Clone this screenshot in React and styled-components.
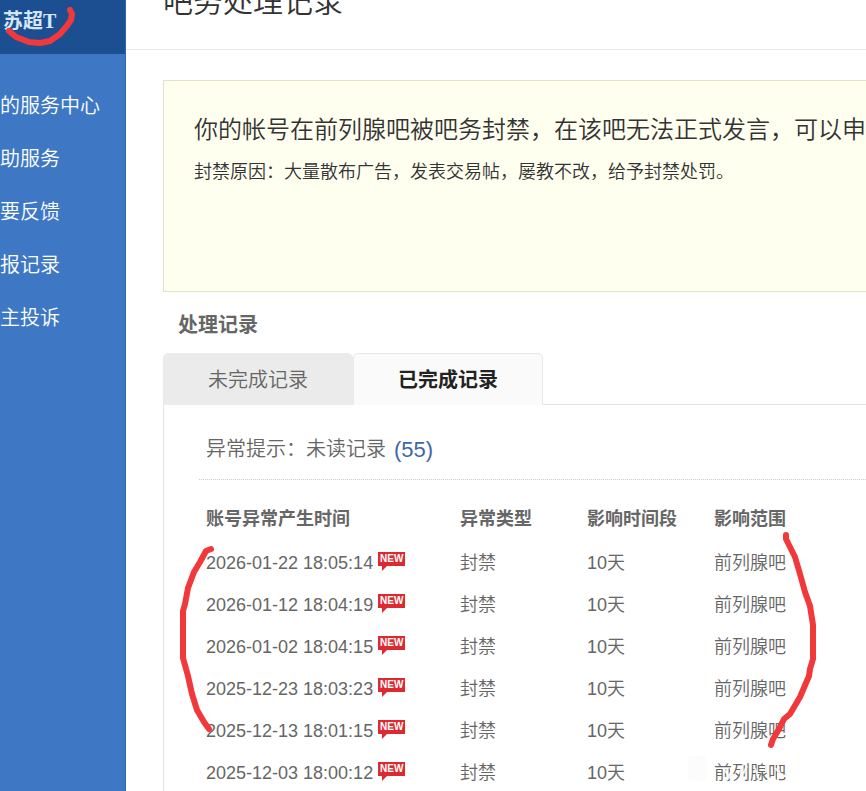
import React from "react";
import styled, { createGlobalStyle } from "styled-components";

const GlobalStyle = createGlobalStyle`
  * { box-sizing: border-box; }
  body {
    margin: 0;
    background: #fff;
    color: #666;
    font-family: "Liberation Sans", "Noto Sans CJK SC", sans-serif;
    font-weight: 350;
  }
`;

const Page = styled.div`
  position: relative;
  display: flex;
  height: 100vh;
  overflow: hidden;
`;

const Sidebar = styled.aside`
  flex: 0 0 126px;
  background: #3e78c5;
  border-right: 1px solid #3464ae;
  overflow: hidden;
`;

const UserName = styled.div`
  height: 54px;
  margin-right: -1px;
  padding: 7px 3px;
  background: #1c4f92;
  color: #d3e6fa;
  font: bold 20px/28px "Liberation Serif", "Noto Sans CJK SC", serif;
  white-space: nowrap;
`;

const Nav = styled.nav`
  display: flex;
  flex-direction: column;
  padding-top: 26px;
`;

const NavLink = styled.a`
  color: #fff;
  font-size: 20px;
  line-height: 53px;
  text-decoration: none;
  white-space: nowrap;
`;

const Main = styled.main`
  flex: 1;
  min-width: 0;
  overflow: hidden;
`;

const Header = styled.header`
  display: flex;
  align-items: flex-start;
  height: 50px;
  padding-left: 37px;
  border-bottom: 1px solid #e8e8e8;
`;

const Title = styled.h1`
  margin: -20px 0 0;
  color: #333;
  font-size: 30px;
  font-weight: 350;
  line-height: 44px;
`;

const Content = styled.div`
  padding: 30px 0 0 37px;
`;

const Notice = styled.section`
  height: 212px;
  padding: 31px 30px;
  background: #fffff0;
  border: 1px solid #e2e2c4;
  border-right: 0;
  color: #333;
  white-space: nowrap;
  overflow: hidden;
`;

const NoticeTitle = styled.p`
  margin: 0;
  font-size: 24px;
  line-height: 36px;
`;

const NoticeReason = styled.p`
  margin: 9px 0 0;
  font-size: 18px;
  line-height: 30px;
`;

const SectionTitle = styled.h2`
  margin: 0;
  padding: 16px 15px 10px;
  font-size: 20px;
  line-height: 35px;
`;

const Tabs = styled.div`
  display: flex;
  border-bottom: 1px solid #e2e2e2;
`;

const Tab = styled.button`
  height: 52px;
  margin: 0 0 -1px;
  padding: 0 44px 2px;
  border: 1px solid ${(p) => (p.$active ? "#e8e8e8" : "#ebebeb")};
  border-bottom-color: ${(p) => (p.$active ? "#fafafa" : "#ebebeb")};
  border-radius: 5px 5px 0 0;
  background: ${(p) => (p.$active ? "#fafafa" : "#ebebeb")};
  color: ${(p) => (p.$active ? "#222" : "#666")};
  font-family: inherit;
  font-size: 20px;
  font-weight: ${(p) => (p.$active ? 700 : 350)};
`;

const Panel = styled.section`
  padding: 15px 0 0 35px;
  border-left: 1px solid #e2e2e2;
`;

const Unread = styled.div`
  display: flex;
  gap: 8px;
  padding-left: 7px;
  border-bottom: 1px dotted #ccc;
  font-size: 20px;
  line-height: 59px;
`;

const UnreadLink = styled.a`
  color: #3d67a5;
  font-size: 22px;
  text-decoration: none;
`;

const Records = styled.table`
  width: 100%;
  margin-top: 16px;
  border-collapse: collapse;
  table-layout: fixed;
  font-size: 18px;
  line-height: 24px;
  text-align: left;
  white-space: nowrap;
`;

const Head = styled.th`
  width: ${(p) => p.$width || "auto"};
  height: 46px;
  padding: 0 7px;
`;

const Cell = styled.td`
  height: 42px;
  padding: 0 7px;
`;

const Time = styled.div`
  display: flex;
  align-items: center;
  gap: 5px;
`;

const NewBadge = styled.span`
  position: relative;
  width: 27px;
  margin-bottom: 8px;
  background: #dd2a30;
  color: #fff;
  font-size: 10px;
  font-weight: 700;
  line-height: 14px;
  text-align: center;

  &::after {
    content: "";
    position: absolute;
    top: 14px;
    left: 4px;
    border-top: 5px solid #dd2a30;
    border-right: 5px solid transparent;
  }
`;

const Pen = styled.svg`
  position: absolute;
  top: 0;
  left: 0;
  pointer-events: none;
`;

const navItems = ["的服务中心", "助服务", "要反馈", "报记录", "主投诉"];

const times = [
  "2026-01-22 18:05:14",
  "2026-01-12 18:04:19",
  "2026-01-02 18:04:15",
  "2025-12-23 18:03:23",
  "2025-12-13 18:01:15",
  "2025-12-03 18:00:12",
];

export default function App() {
  return (
    <Page>
      <GlobalStyle />
      <Sidebar>
        <UserName>苏超T</UserName>
        <Nav>
          {navItems.map((item) => (
            <NavLink href="#" key={item}>{item}</NavLink>
          ))}
        </Nav>
      </Sidebar>
      <Main>
        <Header>
          <Title>吧务处理记录</Title>
        </Header>
        <Content>
          <Notice>
            <NoticeTitle>你的帐号在前列腺吧被吧务封禁，在该吧无法正式发言，可以申</NoticeTitle>
            <NoticeReason>封禁原因：大量散布广告，发表交易帖，屡教不改，给予封禁处罚。</NoticeReason>
          </Notice>
          <SectionTitle>处理记录</SectionTitle>
          <Tabs role="tablist">
            <Tab role="tab" aria-selected="false">未完成记录</Tab>
            <Tab role="tab" aria-selected="true" $active>已完成记录</Tab>
          </Tabs>
          <Panel role="tabpanel">
            <Unread>
              <span>异常提示：未读记录</span>
              <UnreadLink href="#">(55)</UnreadLink>
            </Unread>
            <Records>
              <thead>
                <tr>
                  <Head $width="254px">账号异常产生时间</Head>
                  <Head $width="127px">异常类型</Head>
                  <Head $width="127px">影响时间段</Head>
                  <Head>影响范围</Head>
                </tr>
              </thead>
              <tbody>
                {times.map((time) => (
                  <tr key={time}>
                    <Cell>
                      <Time>
                        {time}
                        <NewBadge>NEW</NewBadge>
                      </Time>
                    </Cell>
                    <Cell>封禁</Cell>
                    <Cell>10天</Cell>
                    <Cell>前列腺吧</Cell>
                  </tr>
                ))}
              </tbody>
            </Records>
          </Panel>
        </Content>
      </Main>
      <Pen width="866" height="791" viewBox="0 0 866 791" fill="none" aria-hidden="true">
        <g stroke="#f1393b" strokeWidth="6" strokeLinecap="round" strokeLinejoin="round">
          <path d="M70 10L72 14L71 20L66 27L60 34L50 41L40 43L29 42L16 37L9 31" />
          <path d="M211 549L206 551L200 562L194 572L188 588L185 604L183 611V658L188 676L192 694L197 710L204 722L209 729" />
          <path d="M786 535V539L795 557L800 574L805 592L810 606L813 625V659L810 669L809 676L800 697L790 714L784 719L779 729L773 739L771 745" />
        </g>
        <rect x="688" y="756" width="18" height="25" rx="4" fill="#fcfcfc" />
        <path
          d="M723 768L731 779M735 765L725 783M741 767V781M747 766L743 774M755 768L759 780M766 765V772M775 768L782 775M778 764V782"
          stroke="#fff"
          strokeWidth="2"
          strokeOpacity=".85"
        />
      </Pen>
    </Page>
  );
}
